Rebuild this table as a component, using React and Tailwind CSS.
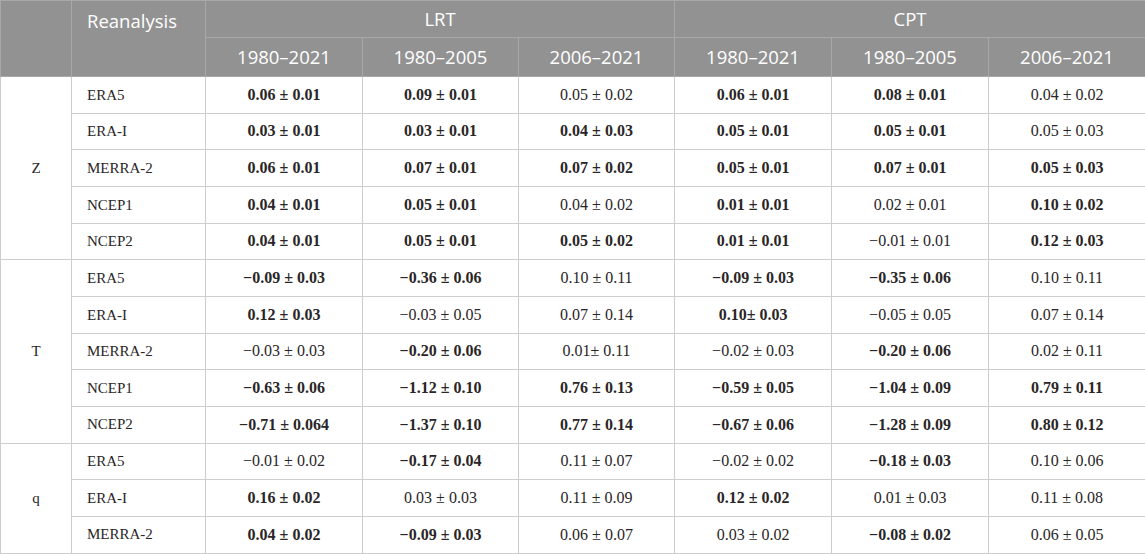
import React from "react";

const groups = [
  {
    label: "Z",
    rows: [
      ["ERA5", ["0.06 ± 0.01", 1], ["0.09 ± 0.01", 1], ["0.05 ± 0.02", 0], ["0.06 ± 0.01", 1], ["0.08 ± 0.01", 1], ["0.04 ± 0.02", 0]],
      ["ERA-I", ["0.03 ± 0.01", 1], ["0.03 ± 0.01", 1], ["0.04 ± 0.03", 1], ["0.05 ± 0.01", 1], ["0.05 ± 0.01", 1], ["0.05 ± 0.03", 0]],
      ["MERRA-2", ["0.06 ± 0.01", 1], ["0.07 ± 0.01", 1], ["0.07 ± 0.02", 1], ["0.05 ± 0.01", 1], ["0.07 ± 0.01", 1], ["0.05 ± 0.03", 1]],
      ["NCEP1", ["0.04 ± 0.01", 1], ["0.05 ± 0.01", 1], ["0.04 ± 0.02", 0], ["0.01 ± 0.01", 1], ["0.02 ± 0.01", 0], ["0.10 ± 0.02", 1]],
      ["NCEP2", ["0.04 ± 0.01", 1], ["0.05 ± 0.01", 1], ["0.05 ± 0.02", 1], ["0.01 ± 0.01", 1], ["−0.01 ± 0.01", 0], ["0.12 ± 0.03", 1]],
    ],
  },
  {
    label: "T",
    rows: [
      ["ERA5", ["−0.09 ± 0.03", 1], ["−0.36 ± 0.06", 1], ["0.10 ± 0.11", 0], ["−0.09 ± 0.03", 1], ["−0.35 ± 0.06", 1], ["0.10 ± 0.11", 0]],
      ["ERA-I", ["0.12 ± 0.03", 1], ["−0.03 ± 0.05", 0], ["0.07 ± 0.14", 0], ["0.10± 0.03", 1], ["−0.05 ± 0.05", 0], ["0.07 ± 0.14", 0]],
      ["MERRA-2", ["−0.03 ± 0.03", 0], ["−0.20 ± 0.06", 1], ["0.01± 0.11", 0], ["−0.02 ± 0.03", 0], ["−0.20 ± 0.06", 1], ["0.02 ± 0.11", 0]],
      ["NCEP1", ["−0.63 ± 0.06", 1], ["−1.12 ± 0.10", 1], ["0.76 ± 0.13", 1], ["−0.59 ± 0.05", 1], ["−1.04 ± 0.09", 1], ["0.79 ± 0.11", 1]],
      ["NCEP2", ["−0.71 ± 0.064", 1], ["−1.37 ± 0.10", 1], ["0.77 ± 0.14", 1], ["−0.67 ± 0.06", 1], ["−1.28 ± 0.09", 1], ["0.80 ± 0.12", 1]],
    ],
  },
  {
    label: "q",
    rows: [
      ["ERA5", ["−0.01 ± 0.02", 0], ["−0.17 ± 0.04", 1], ["0.11 ± 0.07", 0], ["−0.02 ± 0.02", 0], ["−0.18 ± 0.03", 1], ["0.10 ± 0.06", 0]],
      ["ERA-I", ["0.16 ± 0.02", 1], ["0.03 ± 0.03", 0], ["0.11 ± 0.09", 0], ["0.12 ± 0.02", 1], ["0.01 ± 0.03", 0], ["0.11 ± 0.08", 0]],
      ["MERRA-2", ["0.04 ± 0.02", 1], ["−0.09 ± 0.03", 1], ["0.06 ± 0.07", 0], ["0.03 ± 0.02", 0], ["−0.08 ± 0.02", 1], ["0.06 ± 0.05", 0]],
    ],
  },
];

const periods = ["1980–2021", "1980–2005", "2006–2021"];

const head = "bg-[#929292] border border-[#a8a8a8] text-white font-normal text-[18.5px]";
const cell = "border border-[#cdcdcd] h-[36.67px] text-[#2a2627] p-0";

export default function App() {
  return (
    <div className="w-[1145px] h-[554px] bg-white overflow-hidden">
      <table className="w-[1145px] table-fixed border-collapse">
        <colgroup>
          <col className="w-[71px]" />
          <col className="w-[134px]" />
          <col className="w-[157px]" />
          <col className="w-[156px]" />
          <col className="w-[156px]" />
          <col className="w-[157px]" />
          <col className="w-[157px]" />
          <col className="w-[157px]" />
        </colgroup>
        <thead className="font-['Open_Sans',sans-serif]">
          <tr className="h-[37px]">
            <th rowSpan={2} className={head}></th>
            <th rowSpan={2} className={`${head} text-left align-top pl-[15px] pt-[6px]`}>Reanalysis</th>
            <th colSpan={3} className={`${head} text-center`}>LRT</th>
            <th colSpan={3} className={`${head} text-center`}>CPT</th>
          </tr>
          <tr className="h-[39px]">
            {[...periods, ...periods].map((p, i) => (
              <th key={i} className={`${head} text-center`}>{p}</th>
            ))}
          </tr>
        </thead>
        <tbody className="font-['Liberation_Serif',serif]">
          {groups.map((g) =>
            g.rows.map((r, i) => (
              <tr key={g.label + r[0]}>
                {i === 0 && (
                  <td rowSpan={g.rows.length} className={`${cell} text-center text-[15px]`}>{g.label}</td>
                )}
                <td className={`${cell} pl-[15px] text-left text-[15px]`}>{r[0]}</td>
                {r.slice(1).map(([v, b], j) => (
                  <td key={j} className={`${cell} text-center text-[16px] ${b ? "font-bold" : ""}`}>{v}</td>
                ))}
              </tr>
            ))
          )}
        </tbody>
      </table>
    </div>
  );
}
